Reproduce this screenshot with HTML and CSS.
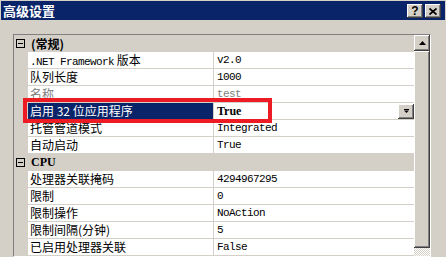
FILE: index.html
```html
<!DOCTYPE html>
<html lang="zh-CN">
<head>
    <meta charset="UTF-8">
    <title>高级设置</title>
    <link rel="stylesheet" href="styles.css">
</head>
<body>
<div class="window">
  <div class="titlebar">
    <span class="title">高级设置</span>
    <div class="caption-btns">
      <span class="cbtn help">?</span>
      <span class="cbtn close">
        <svg width="8" height="7" viewBox="0 0 8 7"><path d="M0.5 0.5 L7.5 6.5 M7.5 0.5 L0.5 6.5" stroke="#000" stroke-width="1.7"/></svg>
      </span>
    </div>
  </div>

  <div class="client">
    <div class="propgrid">
      <div class="rows">
        <div class="row cat">
          <div class="gutter"><span class="toggle"></span></div>
          <div class="cat-name">(常规)</div>
        </div>
        <div class="row">
          <div class="gutter"></div>
          <div class="label"><span class="lat">.NET Framework</span> 版本</div>
          <div class="value">v2.0</div>
        </div>
        <div class="row">
          <div class="gutter"></div>
          <div class="label">队列长度</div>
          <div class="value">1000</div>
        </div>
        <div class="row disabled">
          <div class="gutter"></div>
          <div class="label">名称</div>
          <div class="value">test</div>
        </div>
        <div class="row selected">
          <div class="gutter"></div>
          <div class="label">启用 32 位应用程序</div>
          <div class="value"><b>True</b><span class="dropbtn"><svg width="5" height="4" viewBox="0 0 5 4"><path d="M0 0H5V1H0Z M0 1.5H5L2.5 4Z" fill="#000"/></svg></span></div>
        </div>
        <div class="row">
          <div class="gutter"></div>
          <div class="label">托管管道模式</div>
          <div class="value">Integrated</div>
        </div>
        <div class="row">
          <div class="gutter"></div>
          <div class="label">自动启动</div>
          <div class="value">True</div>
        </div>
        <div class="row cat">
          <div class="gutter"><span class="toggle"></span></div>
          <div class="cat-name mono">CPU</div>
        </div>
        <div class="row">
          <div class="gutter"></div>
          <div class="label">处理器关联掩码</div>
          <div class="value">4294967295</div>
        </div>
        <div class="row">
          <div class="gutter"></div>
          <div class="label">限制</div>
          <div class="value">0</div>
        </div>
        <div class="row">
          <div class="gutter"></div>
          <div class="label">限制操作</div>
          <div class="value">NoAction</div>
        </div>
        <div class="row">
          <div class="gutter"></div>
          <div class="label">限制间隔(分钟)</div>
          <div class="value">5</div>
        </div>
        <div class="row">
          <div class="gutter"></div>
          <div class="label">已启用处理器关联</div>
          <div class="value">False</div>
        </div>
      </div>
      <div class="scrollbar">
        <div class="sb-btn"><svg width="7" height="4" viewBox="0 0 7 4"><path d="M3.5 0L7 4H0Z" fill="#000"/></svg></div>
        <div class="sb-thumb"></div>
        <div class="sb-track"></div>
      </div>
    </div>
  </div>

  <!-- 红框标注 -->
  <div class="mark"></div>
</div>
</body>
</html>
```

FILE: styles.css
```css
body{
  margin:0;
  background:#d4d0c8;
  font-family:"Noto Sans CJK SC", sans-serif;
  font-size:12px;
  overflow:hidden;
}
.window{
  position:relative;
  width:446px;
  height:257px;
  overflow:hidden;
}
.titlebar{
  height:19px;
  margin:1px 1px 0 1px;
  background:#0a246a;
  display:flex;
  align-items:center;
  justify-content:space-between;
  padding:0 4px 0 2px;
}
.title{
  color:#fff;
  font-weight:bold;
  font-size:13px;
  line-height:19px;
}
.caption-btns{
  display:flex;
  gap:2px;
  margin-top:1px;
}
.cbtn{
  width:16px;
  height:14px;
  box-sizing:border-box;
  background:#d4d0c8;
  box-shadow:inset -1px -1px #404040, inset 1px 1px #fff, inset -2px -2px #808080;
  display:flex;
  align-items:center;
  justify-content:center;
}
.cbtn.help{
  font-family:"Liberation Sans", sans-serif;
  font-weight:bold;
  font-size:12px;
  line-height:14px;
  color:#000;
}
.client{
  padding:14px 0 0 13px;
}
.propgrid{
  display:flex;
  width:fit-content;
  border:1px solid;
  border-color:#808080 #fff #fff #808080;
}
.rows{
  width:400px;
}
.row{
  display:grid;
  grid-template-columns:14px 186px 200px;
  height:17px;
}
.gutter{
  background:#d4d0c8;
}
.label, .value{
  background:#fff;
  border-bottom:1px solid #d4d0c8;
  line-height:16px;
  white-space:nowrap;
  overflow:hidden;
}
.label{
  border-right:1px solid #d4d0c8;
  padding-left:2px;
}
.lat{
  font-family:"Liberation Mono", monospace;
  font-size:11px;
  letter-spacing:-0.6px;
}
.value{
  padding-left:3px;
  font-family:"Liberation Mono", monospace;
  font-size:11px;
  letter-spacing:-0.6px;
  display:flex;
  align-items:center;
  justify-content:space-between;
}
.row.cat{
  grid-template-columns:14px 386px;
}
.cat-name{
  font-weight:bold;
  line-height:17px;
  padding-left:3px;
}
.cat-name.mono{
  font-family:"Liberation Serif", serif;
  font-size:12px;
}
.toggle{
  display:block;
  position:relative;
  width:9px;
  height:9px;
  box-sizing:border-box;
  border:1px solid #000;
  margin:4px 0 0 2px;
}
.toggle::after{
  content:"";
  position:absolute;
  left:1px;
  top:3px;
  width:5px;
  height:1px;
  background:#000;
}
.disabled .label, .disabled .value{
  color:#808080;
}
.selected .label{
  background:#0a246a;
  color:#fff;
}
.selected .value b{
  font-family:"Liberation Serif", serif;
  font-weight:bold;
  font-size:12px;
  letter-spacing:0;
}
.dropbtn{
  width:16px;
  height:15px;
  box-sizing:border-box;
  background:#d4d0c8;
  box-shadow:inset -1px -1px #404040, inset 1px 1px #fff, inset -2px -2px #808080;
  display:flex;
  align-items:center;
  justify-content:center;
}
.scrollbar{
  width:16px;
  display:flex;
  flex-direction:column;
}
.sb-btn{
  height:16px;
  background:#d4d0c8;
  box-shadow:inset -1px -1px #404040, inset 1px 1px #fff, inset -2px -2px #808080;
  display:flex;
  align-items:center;
  justify-content:center;
}
.sb-thumb{
  height:197px;
  background:#d4d0c8;
  box-shadow:inset -1px -1px #404040, inset 1px 1px #fff, inset -2px -2px #808080;
}
.sb-track{
  flex:1;
  background:repeating-conic-gradient(#fff 0 25%, #d4d0c8 0 50%) 0 0/2px 2px;
}
.mark{
  position:absolute;
  left:23px;
  top:98px;
  width:241px;
  height:17px;
  border:4px solid #ed1c24;
}
```
